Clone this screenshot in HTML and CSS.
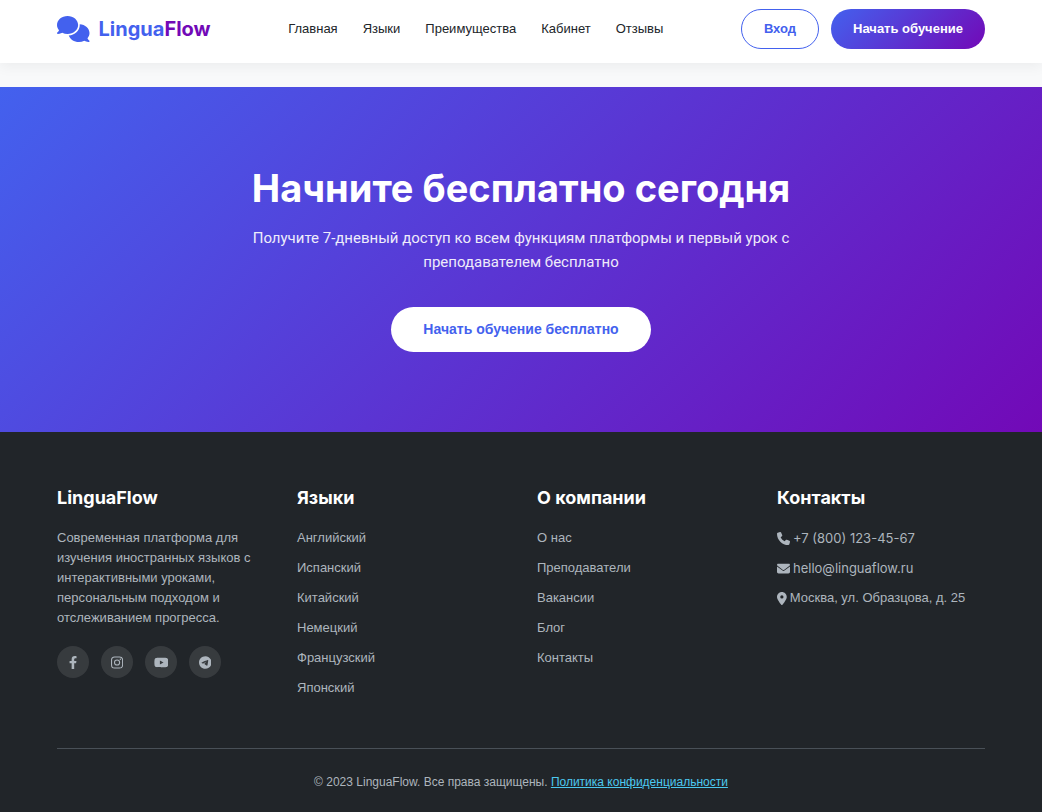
FILE: index.html
```html
<!DOCTYPE html>
<html lang="ru">
<head>
  <meta charset="UTF-8">
  <meta name="viewport" content="width=device-width, initial-scale=1.0">
  <title>LinguaFlow</title>
  <link rel="stylesheet" href="styles.css">
</head>
<body>
  <header>
    <div class="container header-container">
      <a href="#" class="logo">
        <svg class="logo-icon" viewBox="0 0 640 512" aria-hidden="true"><path d="M208 352c114.900 0 208-78.800 208-176S322.900 0 208 0S0 78.800 0 176c0 38.600 14.700 74.300 39.600 103.400c-3.500 9.400-8.700 17.700-14.200 24.700c-4.800 6.200-9.700 11-13.300 14.300c-1.800 1.600-3.300 2.900-4.300 3.700c-.5 .4-.9 .7-1.100 .8l-.2 .2C1 327.200-1.400 334.400 .8 340.900S9.100 352 16 352c21.800 0 43.800-5.600 62.100-12.500c9.200-3.500 17.800-7.400 25.200-11.400C134.100 343.300 169.800 352 208 352zM448 176c0 112.300-99.100 196.900-216.500 207C255.800 457.400 336.400 512 432 512c38.200 0 73.900-8.700 104.700-23.900c7.500 4 16 7.900 25.200 11.400c18.300 6.900 40.300 12.500 62.100 12.500c6.900 0 13.100-4.500 15.200-11.100c2.100-6.600-.2-13.800-5.800-17.900l-.2-.2c-.2-.2-.6-.4-1.100-.8c-1-.8-2.500-2-4.300-3.700c-3.600-3.300-8.500-8.100-13.300-14.300c-5.500-7-10.700-15.400-14.200-24.700c24.900-29 39.600-64.700 39.600-103.400c0-92.800-84.900-168.900-192.600-175.500c.4 5.100 .6 10.300 .6 15.500z"/></svg>
        <span>Lingua<span class="logo-accent">Flow</span></span>
      </a>
      <nav>
        <a href="#">Главная</a>
        <a href="#">Языки</a>
        <a href="#">Преимущества</a>
        <a href="#">Кабинет</a>
        <a href="#">Отзывы</a>
      </nav>
      <div class="auth-buttons">
        <button class="btn btn-outline">Вход</button>
        <button class="btn btn-primary">Начать обучение</button>
      </div>
    </div>
  </header>

  <section class="cta">
    <div class="container">
      <h2>Начните бесплатно сегодня</h2>
      <p>Получите 7-дневный доступ ко всем функциям платформы и первый урок с преподавателем бесплатно</p>
      <button class="btn btn-light">Начать обучение бесплатно</button>
    </div>
  </section>

  <footer>
    <div class="container">
      <div class="footer-grid">
        <div class="footer-col">
          <h3>LinguaFlow</h3>
          <p>Современная платформа для изучения иностранных языков с интерактивными уроками, персональным подходом и отслеживанием прогресса.</p>
          <div class="social-links">
            <a href="#" aria-label="Facebook"><svg viewBox="0 0 320 512"><path d="M279.140 288l14.220-92.660h-88.910v-60.130c0-25.350 12.420-50.060 52.240-50.060h40.420V6.260S260.430 0 225.360 0c-73.220 0-121.080 44.380-121.080 124.720v70.620H22.890V288h81.390v224h100.170V288z"/></svg></a>
            <a href="#" aria-label="Instagram"><svg viewBox="0 16 448 480"><path fill-rule="evenodd" d="M132 32H316A132 132 0 0 1 448 164V348A132 132 0 0 1 316 480H132A132 132 0 0 1 0 348V164A132 132 0 0 1 132 32zM136 72A96 96 0 0 0 40 168V344A96 96 0 0 0 136 440H312A96 96 0 0 0 408 344V168A96 96 0 0 0 312 72zM224 141A115 115 0 1 1 224 371A115 115 0 1 1 224 141zM224 181A75 75 0 1 0 224 331A75 75 0 1 0 224 181zM344 109A27 27 0 1 1 344 163A27 27 0 1 1 344 109z"/></svg></a>
            <a href="#" aria-label="YouTube"><svg viewBox="0 0 576 512"><path d="M549.655 124.083c-6.281-23.650-24.787-42.276-48.284-48.597C458.781 64 288 64 288 64S117.220 64 74.629 75.486c-23.497 6.322-42.003 24.947-48.284 48.597-11.412 42.867-11.412 132.305-11.412 132.305s0 89.438 11.412 132.305c6.281 23.650 24.787 41.500 48.284 47.821C117.220 448 288 448 288 448s170.780 0 213.371-11.486c23.497-6.321 42.003-24.171 48.284-47.821 11.412-42.867 11.412-132.305 11.412-132.305s0-89.438-11.412-132.305zm-317.510 213.508V175.185l142.739 81.205-142.739 81.201z"/></svg></a>
            <a href="#" aria-label="Telegram"><svg viewBox="0 0 496 512"><path d="M248 8C111.033 8 0 119.033 0 256S111.033 504 248 504 496 392.967 496 256 384.967 8 248 8ZM362.952 176.660c-3.732 39.215-19.881 134.378-28.100 178.300-3.476 18.584-10.322 24.816-16.948 25.425-14.400 1.326-25.338-9.517-39.287-18.661-21.827-14.308-34.158-23.215-55.346-37.177-24.485-16.135-8.612-25 5.342-39.500 3.652-3.793 67.107-61.510 68.335-66.746.153-.655.3-3.100-1.154-4.384s-3.590-.849-5.135-.5q-3.283.746-104.608 69.142-14.845 10.194-26.894 9.934c-8.855-.191-25.888-5.006-38.551-9.123-15.531-5.048-27.875-7.717-26.800-16.291q.84-6.700 18.450-13.700 108.446-47.248 144.628-62.300c68.872-28.647 83.183-33.623 92.511-33.789 2.052-.034 6.639.474 9.610 2.885a10.452 10.452 0 0 1 3.530 6.716A43.765 43.765 0 0 1 362.952 176.660Z"/></svg></a>
          </div>
        </div>
        <div class="footer-col">
          <h3>Языки</h3>
          <ul>
            <li><a href="#">Английский</a></li>
            <li><a href="#">Испанский</a></li>
            <li><a href="#">Китайский</a></li>
            <li><a href="#">Немецкий</a></li>
            <li><a href="#">Французский</a></li>
            <li><a href="#">Японский</a></li>
          </ul>
        </div>
        <div class="footer-col">
          <h3>О компании</h3>
          <ul>
            <li><a href="#">О нас</a></li>
            <li><a href="#">Преподаватели</a></li>
            <li><a href="#">Вакансии</a></li>
            <li><a href="#">Блог</a></li>
            <li><a href="#">Контакты</a></li>
          </ul>
        </div>
        <div class="footer-col">
          <h3>Контакты</h3>
          <ul class="contacts">
            <li><svg viewBox="0 0 512 512"><path d="M164.900 24.600c-7.700-18.600-28-28.500-47.400-23.200l-88 24C12.100 30.200 0 46 0 64C0 311.400 200.600 512 448 512c18 0 33.800-12.100 38.600-29.500l24-88c5.300-19.400-4.600-39.700-23.200-47.400l-96-40c-16.300-6.800-35.200-2.100-46.300 11.600L304.700 368C234.300 334.700 177.300 277.700 144 207.300L193.300 167c13.700-11.200 18.400-30 11.600-46.300l-40-96z"/></svg><span class="latin">+7 (800) 123-45-67</span></li>
            <li><svg viewBox="0 0 512 512"><path d="M48 64C21.500 64 0 85.500 0 112c0 15.100 7.100 29.300 19.200 38.400L236.800 313.600c11.400 8.500 27 8.500 38.400 0L492.800 150.400c12.100-9.100 19.200-23.300 19.200-38.400c0-26.500-21.500-48-48-48H48zM0 176V384c0 35.300 28.700 64 64 64H448c35.300 0 64-28.700 64-64V176L294.400 339.200c-22.800 17.100-54 17.100-76.800 0L0 176z"/></svg><span class="latin">hello@linguaflow.ru</span></li>
            <li><svg viewBox="0 0 384 512"><path d="M215.700 499.200C267 435 384 279.400 384 192C384 86 298 0 192 0S0 86 0 192c0 87.400 117 243 168.300 307.200c12.300 15.300 35.100 15.300 47.400 0zM192 128a64 64 0 1 1 0 128 64 64 0 1 1 0-128z"/></svg><span>Москва, ул. Образцова, д. 25</span></li>
          </ul>
        </div>
      </div>
      <div class="footer-bottom">
        <p>© 2023 LinguaFlow. Все права защищены. <a href="#">Политика конфиденциальности</a></p>
      </div>
    </div>
  </footer>
</body>
</html>
```
FILE: styles.css
```css
:root {
  --primary: #4361ee;
  --secondary: #7209b7;
  --accent: #4cc9f0;
  --dark: #212529;
  --light: #f8f9fa;
  --gray: #adb5bd;
  --gradient: linear-gradient(135deg, var(--primary), var(--secondary));
}

* {
  margin: 0;
  padding: 0;
  box-sizing: border-box;
}

body {
  font-family: 'Liberation Sans', Arial, sans-serif;
  font-size: 13px;
  background: var(--light);
  color: var(--dark);
}

a {
  color: inherit;
  text-decoration: none;
}

svg {
  fill: currentColor;
}

.container {
  max-width: 960px;
  margin: 0 auto;
  padding: 0 16px;
}

header {
  position: sticky;
  top: 0;
  z-index: 100;
  background: #fff;
  padding: 9px 0 14px;
  box-shadow: 0 4px 12px rgba(0, 0, 0, 0.05);
}

.header-container {
  display: flex;
  justify-content: space-between;
  align-items: center;
}

.logo {
  display: flex;
  align-items: center;
  gap: 9px;
  padding-bottom: 1px;
  color: var(--primary);
  font-family: Inter, sans-serif;
  font-size: 20px;
  font-weight: 700;
}

.logo-icon {
  height: 26px;
}

.logo-accent {
  color: var(--secondary);
}

nav {
  display: flex;
  gap: 25px;
  padding-bottom: 2px;
}

.btn {
  border: none;
  border-radius: 50px;
  font-family: inherit;
  font-size: 13px;
  font-weight: 700;
  cursor: pointer;
}

.auth-buttons {
  display: flex;
  gap: 12px;
}

.auth-buttons .btn {
  height: 40px;
  padding: 0 22px 2px;
}

.auth-buttons .btn-outline {
  background: transparent;
  color: var(--primary);
  border: 1px solid var(--primary);
}

.btn-primary {
  background: var(--gradient);
  color: #fff;
}

.cta {
  margin-top: 24px;
  padding: 80px 0;
  background: var(--gradient);
  color: #fff;
  text-align: center;
}

.cta h2 {
  margin-bottom: 16px;
  font-family: Inter, sans-serif;
  font-size: 38px;
  font-weight: 700;
  line-height: 43px;
}

.cta p {
  max-width: 560px;
  margin: 0 auto 33px;
  font-family: Roboto, sans-serif;
  font-size: 15px;
  line-height: 24px;
  opacity: 0.9;
}

.btn-light {
  padding: 14px 32px;
  background: #fff;
  color: var(--primary);
  font-size: 14px;
  line-height: 17px;
}

footer {
  padding: 54px 0 24px;
  background: var(--dark);
  color: var(--gray);
}

.footer-grid {
  display: grid;
  grid-template-columns: repeat(4, 1fr);
  gap: 32px;
  margin-bottom: 40px;
}

.footer-col h3 {
  margin-bottom: 18px;
  color: #fff;
  font-family: Inter, sans-serif;
  font-size: 18px;
  font-weight: 700;
  line-height: 24px;
}

.footer-col p {
  margin-bottom: 18px;
  line-height: 20px;
}

.footer-col ul {
  list-style: none;
}

.footer-col li {
  margin-bottom: 10px;
  line-height: 20px;
}

.contacts li {
  display: flex;
  align-items: center;
  gap: 3px;
}

.contacts svg {
  height: 13px;
}

.latin {
  font-family: Inter, sans-serif;
}

.social-links {
  display: flex;
  gap: 12px;
}

.social-links a {
  display: flex;
  justify-content: center;
  align-items: center;
  width: 32px;
  height: 32px;
  border-radius: 50%;
  background: rgba(255, 255, 255, 0.1);
}

.social-links svg {
  height: 13px;
}

.footer-bottom {
  padding-top: 24px;
  border-top: 1px solid #495057;
  font-size: 12px;
  line-height: 18px;
  text-align: center;
}

.footer-bottom a {
  color: var(--accent);
  text-decoration: underline;
}

@media (max-width: 768px) {
  .header-container {
    flex-wrap: wrap;
    gap: 12px;
  }

  .footer-grid {
    grid-template-columns: 1fr 1fr;
  }
}
```
